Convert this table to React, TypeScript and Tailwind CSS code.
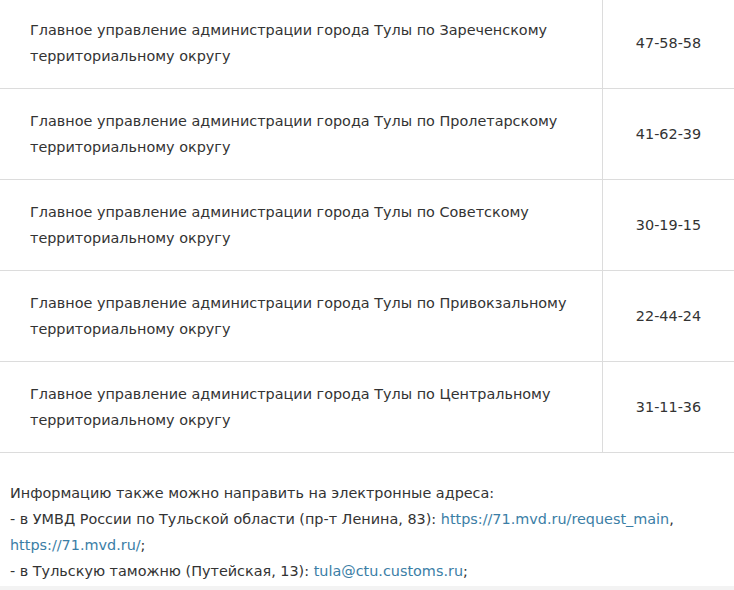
const rows = [
  { name: "Зареченскому", phone: "47-58-58" },
  { name: "Пролетарскому", phone: "41-62-39" },
  { name: "Советскому", phone: "30-19-15" },
  { name: "Привокзальному", phone: "22-44-24" },
  { name: "Центральному", phone: "31-11-36" },
];

export default function App() {
  return (
    <div
      className="w-[734px] h-[590px] overflow-hidden bg-white text-[#333] text-[14.4px] leading-[26px]"
      style={{ fontFamily: '"DejaVu Sans", "Noto Sans", sans-serif' }}
    >
      {/* Table */}
      <div className="-mt-[2px]">
        {rows.map((r) => (
          <div key={r.phone} className="flex border-b border-[#dcdcdc]">
            <div className="w-[603px] shrink-0 border-r border-[#dcdcdc] pl-[30px] pr-4 py-[19px]">
              Главное управление администрации города Тулы по {r.name}
              <br />
              территориальному округу
            </div>
            <div className="flex-1 flex items-center justify-center">{r.phone}</div>
          </div>
        ))}
      </div>

      {/* Extra addresses */}
      <div className="pl-[10px] pt-[27px] pb-[2px]">
        <p>Информацию также можно направить на электронные адреса:</p>
        <p>
          - в УМВД России по Тульской области (пр-т Ленина, 83):{" "}
          <a className="text-[#3b7ea6]">https://71.mvd.ru/request_main</a>,
          <br />
          <a className="text-[#3b7ea6]">https://71.mvd.ru/</a>;
        </p>
        <p>
          - в Тульскую таможню (Путейская, 13):{" "}
          <a className="text-[#3b7ea6]">tula@ctu.customs.ru</a>;
        </p>
      </div>
      <div className="h-[10px] bg-[#f3f3f3]" />
    </div>
  );
}
